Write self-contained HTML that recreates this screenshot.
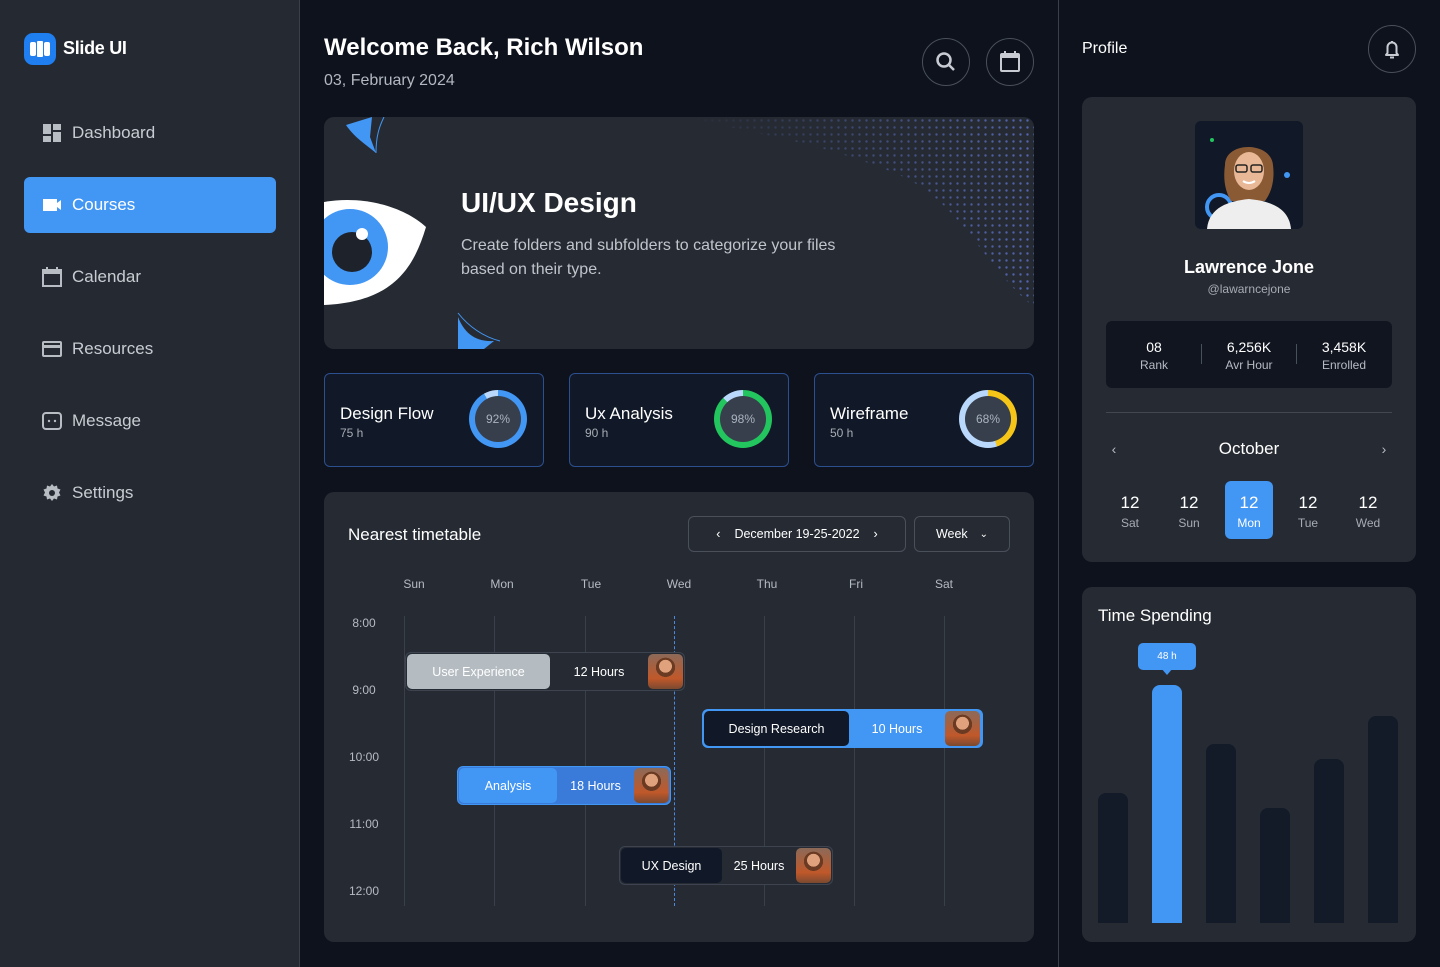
<!DOCTYPE html>
<html><head><meta charset="utf-8"><style>
*{margin:0;padding:0;box-sizing:border-box}
body{width:1440px;height:967px;background:#0d121c;font-family:"Liberation Sans",sans-serif;color:#fff;position:relative;overflow:hidden}
.a{position:absolute}
.side{left:0;top:0;width:300px;height:967px;background:#252a32;border-right:1px solid #3a3f48}
.nav{position:absolute;left:24px;width:252px;height:56px;display:flex;align-items:center;padding-left:18px;font-size:17px;color:#c8ccd2}
.nav svg{margin-right:10px}
.nav.act{background:#4296f4;border-radius:6px;color:#fff}
.card{background:#262b33;border-radius:10px}
.stat{position:absolute;top:373px;width:220px;height:94px;background:#111827;border:1px solid #2c4f8f;border-radius:6px}
.stat .t{position:absolute;left:15px;top:30px;font-size:17px}
.stat .s{position:absolute;left:15px;top:52px;font-size:12px;color:#a7acb4}
.ring{position:absolute;left:144px;top:16px;width:58px;height:58px;border-radius:50%}
.ring div{position:absolute;left:6px;top:6px;width:46px;height:46px;border-radius:50%;background:#373e4c;color:#aab3c0;font-size:12px;display:flex;align-items:center;justify-content:center}
.txt{position:absolute;font-size:12px;color:#b6bbc3;transform:translate(-50%,-50%)}
.vl{position:absolute;top:616px;height:290px;width:1px;background:#39404a}
.ev{position:absolute;height:39px;border-radius:6px;border:1px solid #3d4450;display:flex;align-items:center;font-size:12.5px}
.ev .in{height:35px;margin-left:1px;border-radius:5px;display:flex;align-items:center;justify-content:center}
.ev .h{flex:1;text-align:center}
.av{width:35px;height:35px;border-radius:5px;margin-right:1px;background:radial-gradient(circle at 50% 35%,#e0a27c 0 22%,transparent 23%),radial-gradient(circle at 50% 38%,#6b3a22 0 34%,transparent 35%),linear-gradient(180deg,#8c6a58,#c0582a 70%,#7a4a30)}
.bar{position:absolute;width:30px;bottom:44px;background:#131a28;border-radius:8px 8px 0 0}
.d{position:absolute;top:481px;width:48px;height:58px;border-radius:6px;text-align:center}
.d b{display:block;font-size:17px;font-weight:normal;margin-top:12px}
.d span{display:block;font-size:12px;color:#a7acb4;margin-top:3px}
</style></head><body>
<div class="a side">
 <div class="a" style="left:24px;top:33px;width:32px;height:32px;border-radius:9px;background:#1f7ef0"><svg width="32" height="32"><rect x="6" y="9" width="6" height="14" rx="2" fill="#fff"/><rect x="13" y="8" width="6" height="16" rx="1" fill="#fff"/><rect x="20" y="9" width="6" height="14" rx="2" fill="#fff"/></svg></div>
 <div class="a" style="left:63px;top:38px;font-size:18px;font-weight:bold;letter-spacing:-.3px">Slide UI</div>
 <div class="nav" style="top:105px"><svg width="20" height="20"><rect x="1" y="1" width="8" height="10" fill="#b8bdc4"/><rect x="11" y="1" width="8" height="6" fill="#b8bdc4"/><rect x="1" y="13" width="8" height="6" fill="#b8bdc4"/><rect x="11" y="9" width="8" height="10" fill="#b8bdc4"/></svg>Dashboard</div>
 <div class="nav act" style="top:177px"><svg width="20" height="20"><rect x="1" y="4" width="14" height="12" fill="#fff"/><path d="M15 8l4-3v10l-4-3z" fill="#fff"/></svg>Courses</div>
 <div class="nav" style="top:249px"><svg width="20" height="22"><rect x="1" y="4" width="18" height="16" fill="none" stroke="#b8bdc4" stroke-width="2"/><rect x="1" y="4" width="18" height="4" fill="#b8bdc4"/><rect x="4" y="1" width="2" height="4" fill="#b8bdc4"/><rect x="14" y="1" width="2" height="4" fill="#b8bdc4"/></svg>Calendar</div>
 <div class="nav" style="top:321px"><svg width="20" height="20"><rect x="1" y="3" width="18" height="14" rx="1" fill="none" stroke="#b8bdc4" stroke-width="2"/><rect x="1" y="6" width="18" height="3" fill="#b8bdc4"/></svg>Resources</div>
 <div class="nav" style="top:393px"><svg width="20" height="20"><rect x="1" y="2" width="18" height="16" rx="3" fill="none" stroke="#b8bdc4" stroke-width="2"/><circle cx="7" cy="10" r="1.2" fill="#b8bdc4"/><circle cx="13" cy="10" r="1.2" fill="#b8bdc4"/></svg>Message</div>
 <div class="nav" style="top:465px"><svg width="20" height="20" viewBox="0 0 20 20"><path d="M10 1l2 2.5 3-1 .5 3 3 1-1.5 3 1.5 3-3 1-.5 3-3-1-2 2.5-2-2.5-3 1-.5-3-3-1 1.5-3-1.5-3 3-1 .5-3 3 1z" fill="#b8bdc4"/><circle cx="10" cy="10" r="3" fill="#252a32"/></svg>Settings</div>
</div>

<div class="a" style="left:1058px;top:0;width:1px;height:967px;background:#3a3f48"></div>

<div class="a" style="left:324px;top:34px;font-size:24px;font-weight:bold">Welcome Back, Rich Wilson</div>
<div class="a" style="left:324px;top:72px;font-size:16px;color:#b3b8c0">03, February 2024</div>
<div class="a" style="left:922px;top:38px;width:48px;height:48px;border-radius:50%;border:1px solid #4a505a"><svg width="46" height="46"><circle cx="21" cy="21" r="6.5" fill="none" stroke="#c8ccd2" stroke-width="2.5"/><path d="M26 26l5 5" stroke="#c8ccd2" stroke-width="2.5"/></svg></div>
<div class="a" style="left:986px;top:38px;width:48px;height:48px;border-radius:50%;border:1px solid #4a505a"><svg width="46" height="46"><rect x="14" y="15" width="18" height="17" rx="1" fill="none" stroke="#c8ccd2" stroke-width="2"/><rect x="14" y="15" width="18" height="4" fill="#c8ccd2"/><rect x="17" y="12" width="2" height="4" fill="#c8ccd2"/><rect x="27" y="12" width="2" height="4" fill="#c8ccd2"/></svg></div>

<div class="a card" style="left:324px;top:117px;width:710px;height:232px;overflow:hidden">
 <svg class="a" style="left:0;top:0" width="710" height="232">
  <defs><pattern id="p" width="7" height="7" patternUnits="userSpaceOnUse"><circle cx="3.5" cy="3.5" r="1.2" fill="#5a6cc0"/></pattern>
  <linearGradient id="g" x1="0" x2="1"><stop offset="0" stop-color="#fff" stop-opacity="0"/><stop offset="1" stop-color="#fff" stop-opacity=".9"/></linearGradient>
  <mask id="m"><path d="M360 0 L710 0 L710 190 C660 150 640 90 580 60 C500 25 420 15 360 0Z" fill="url(#g)"/></mask></defs>
  <rect width="710" height="232" fill="url(#p)" mask="url(#m)"/>
  <path d="M0 85 C40 78 80 90 102 110 C90 150 70 185 0 188Z" fill="#fff"/>
  <circle cx="26" cy="130" r="38" fill="#4296f4"/>
  <circle cx="28" cy="135" r="20" fill="#1d222b"/>
  <circle cx="38" cy="117" r="6" fill="#fff"/>
  <path d="M22 8 L48 0 L46 20 L52 36 C40 26 30 20 22 8Z" fill="#4296f4"/>
  <path d="M60 0 C55 10 52 20 52 36" stroke="#4296f4" fill="none"/>
  <path d="M134 200 C140 215 150 225 170 224 L160 232 L134 232Z" fill="#4296f4"/>
  <path d="M134 196 C145 210 160 220 176 224" stroke="#4296f4" fill="none"/>
 </svg>
 <div class="a" style="left:137px;top:70px;font-size:28px;font-weight:bold">UI/UX Design</div>
 <div class="a" style="left:137px;top:117px;font-size:16px;line-height:24px;color:#c0c4cb">Create folders and subfolders to categorize your files<br>based on their type.</div>
</div>

<div class="stat" style="left:324px"><div class="t">Design Flow</div><div class="s">75 h</div><div class="ring" style="background:conic-gradient(#4296f4 0 92%,#b9d8fb 92%)"><div>92%</div></div></div>
<div class="stat" style="left:569px"><div class="t">Ux Analysis</div><div class="s">90 h</div><div class="ring" style="background:conic-gradient(#22c55e 0 88%,#b9d8fb 88%)"><div>98%</div></div></div>
<div class="stat" style="left:814px"><div class="t">Wireframe</div><div class="s">50 h</div><div class="ring" style="background:conic-gradient(#f5c518 0 45%,#b9d8fb 45%)"><div>68%</div></div></div>

<div class="a card" style="left:324px;top:492px;width:710px;height:450px"></div>
<div class="a" style="left:348px;top:525px;font-size:17px">Nearest timetable</div>
<div class="a" style="left:688px;top:516px;width:218px;height:36px;border:1px solid #4a505a;border-radius:6px;font-size:12.5px;display:flex;align-items:center;justify-content:center;gap:14px"><span>‹</span>December 19-25-2022<span>›</span></div>
<div class="a" style="left:914px;top:516px;width:96px;height:36px;border:1px solid #4a505a;border-radius:6px;font-size:12.5px;display:flex;align-items:center;justify-content:center;gap:12px">Week<span style="font-size:10px">⌄</span></div>
<div class="txt" style="left:414px;top:584px">Sun</div><div class="txt" style="left:502px;top:584px">Mon</div><div class="txt" style="left:591px;top:584px">Tue</div><div class="txt" style="left:679px;top:584px">Wed</div><div class="txt" style="left:767px;top:584px">Thu</div><div class="txt" style="left:856px;top:584px">Fri</div><div class="txt" style="left:944px;top:584px">Sat</div>
<div class="txt" style="left:364px;top:623px">8:00</div><div class="txt" style="left:364px;top:690px">9:00</div><div class="txt" style="left:364px;top:757px">10:00</div><div class="txt" style="left:364px;top:824px">11:00</div><div class="txt" style="left:364px;top:891px">12:00</div>
<div class="vl" style="left:404px"></div><div class="vl" style="left:494px"></div><div class="vl" style="left:585px"></div><div class="vl" style="left:674px;background:none;border-left:1px dashed #4a8ae0"></div><div class="vl" style="left:764px"></div><div class="vl" style="left:854px"></div><div class="vl" style="left:944px"></div>

<div class="ev" style="left:405px;top:652px;width:280px;background:#262b33"><div class="in" style="width:143px;background:#b4bcc2;color:#fff">User Experience</div><div class="h">12 Hours</div><div class="av"></div></div>
<div class="ev" style="left:702px;top:709px;width:281px;background:#4296f4;border:2px solid #4296f4"><div class="in" style="width:145px;background:#111827;margin-left:0">Design Research</div><div class="h">10 Hours</div><div class="av"></div></div>
<div class="ev" style="left:457px;top:766px;width:214px;background:#3a7ad9;border:1px solid #4296f4"><div class="in" style="width:98px;background:#4296f4">Analysis</div><div class="h">18 Hours</div><div class="av"></div></div>
<div class="ev" style="left:619px;top:846px;width:214px;background:#262b33"><div class="in" style="width:101px;background:#111827">UX Design</div><div class="h">25 Hours</div><div class="av"></div></div>

<div class="a" style="left:1082px;top:40px;font-size:16px">Profile</div>
<div class="a" style="left:1368px;top:25px;width:48px;height:48px;border-radius:50%;border:1px solid #4a505a"><svg width="46" height="46"><path d="M17 29h12l-1.5-2v-6a4.5 4.5 0 0 0-9 0v6z" fill="none" stroke="#c8ccd2" stroke-width="2" stroke-linejoin="round"/><path d="M21 31.5h4" stroke="#c8ccd2" stroke-width="2"/><path d="M23 15v1.5" stroke="#c8ccd2" stroke-width="2"/></svg></div>

<div class="a card" style="left:1082px;top:97px;width:334px;height:465px"></div>
<div class="a" style="left:1195px;top:121px;width:108px;height:108px;border-radius:6px;background:#111827;overflow:hidden">
 <svg width="108" height="108"><circle cx="17" cy="19" r="2" fill="#22c55e"/><circle cx="92" cy="54" r="3" fill="#4296f4"/><circle cx="24" cy="86" r="12" fill="none" stroke="#4296f4" stroke-width="4"/>
 <path d="M30 44 C30 20 76 20 78 44 C80 60 76 72 70 80 L36 80 C30 70 28 58 30 44Z" fill="#8a5a35"/>
 <ellipse cx="54" cy="50" rx="15" ry="19" fill="#e9b896"/>
 <rect x="41" y="44" width="11" height="7" rx="2" fill="none" stroke="#222" stroke-width="1.5"/><rect x="56" y="44" width="11" height="7" rx="2" fill="none" stroke="#222" stroke-width="1.5"/>
 <path d="M48 60q6 4 12 0" stroke="#fff" stroke-width="2" fill="none"/>
 <path d="M12 108 C14 86 34 80 54 78 C74 80 94 86 96 108Z" fill="#eeeeee"/></svg>
</div>
<div class="a" style="left:1082px;top:257px;width:334px;text-align:center;font-size:18px;font-weight:bold">Lawrence Jone</div>
<div class="a" style="left:1082px;top:282px;width:334px;text-align:center;font-size:12px;color:#a7acb4">@lawarncejone</div>
<div class="a" style="left:1106px;top:321px;width:286px;height:67px;background:#111520;border-radius:6px"></div>
<div class="a" style="left:1201px;top:344px;width:1px;height:20px;background:#4a505a"></div><div class="a" style="left:1296px;top:344px;width:1px;height:20px;background:#4a505a"></div>
<div class="txt" style="left:1154px;top:347px;font-size:14px;color:#fff">08</div><div class="txt" style="left:1154px;top:365px">Rank</div>
<div class="txt" style="left:1249px;top:347px;font-size:14px;color:#fff">6,256K</div><div class="txt" style="left:1249px;top:365px">Avr Hour</div>
<div class="txt" style="left:1344px;top:347px;font-size:14px;color:#fff">3,458K</div><div class="txt" style="left:1344px;top:365px">Enrolled</div>
<div class="a" style="left:1106px;top:412px;width:286px;height:1px;background:#424852"></div>
<div class="txt" style="left:1114px;top:449px;font-size:14px">‹</div><div class="txt" style="left:1384px;top:449px;font-size:14px">›</div>
<div class="txt" style="left:1249px;top:449px;font-size:17px;color:#fff">October</div>
<div class="d" style="left:1106px"><b>12</b><span>Sat</span></div>
<div class="d" style="left:1165px"><b>12</b><span>Sun</span></div>
<div class="d" style="left:1225px;background:#4296f4"><b>12</b><span style="color:#fff">Mon</span></div>
<div class="d" style="left:1284px"><b>12</b><span>Tue</span></div>
<div class="d" style="left:1344px"><b>12</b><span>Wed</span></div>

<div class="a card" style="left:1082px;top:587px;width:334px;height:355px"></div>
<div class="a" style="left:1098px;top:606px;font-size:17px">Time Spending</div>
<div class="a" style="left:1138px;top:643px;width:58px;height:27px;background:#4296f4;border-radius:5px;font-size:10px;display:flex;align-items:center;justify-content:center">48 h</div>
<div class="a" style="left:1161px;top:668px;width:0;height:0;border-left:6px solid transparent;border-right:6px solid transparent;border-top:7px solid #4296f4"></div>
<div class="bar" style="left:1098px;top:793px"></div>
<div class="bar" style="left:1152px;top:685px;background:#4296f4"></div>
<div class="bar" style="left:1206px;top:744px"></div>
<div class="bar" style="left:1260px;top:808px"></div>
<div class="bar" style="left:1314px;top:759px"></div>
<div class="bar" style="left:1368px;top:716px"></div>
</body></html>
